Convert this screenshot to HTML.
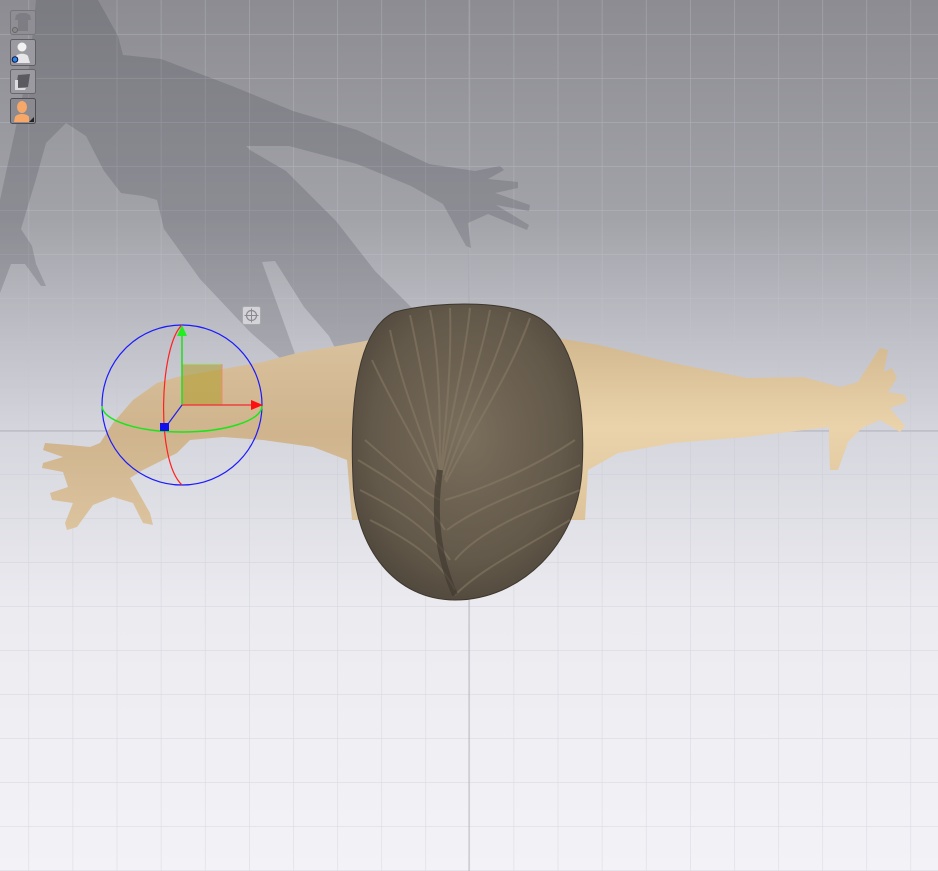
<!DOCTYPE html>
<html><head><meta charset="utf-8"><style>
html,body{margin:0;padding:0;width:938px;height:871px;overflow:hidden;}
svg{display:block}
</style></head><body>
<svg width="938" height="871" viewBox="0 0 938 871" xmlns="http://www.w3.org/2000/svg">
<defs>
<linearGradient id="bg" x1="0" y1="0" x2="0" y2="1">
<stop offset="0" stop-color="#8c8c92"/>
<stop offset="0.25" stop-color="#a2a2a9"/>
<stop offset="0.4" stop-color="#c2c2ca"/>
<stop offset="0.5" stop-color="#d6d6de"/>
<stop offset="0.7" stop-color="#ebebf0"/>
<stop offset="1" stop-color="#f3f3f7"/>
</linearGradient>
<linearGradient id="skin" x1="0" y1="0" x2="0" y2="1">
<stop offset="0" stop-color="#d2b78e"/>
<stop offset="0.5" stop-color="#ead3ab"/>
<stop offset="1" stop-color="#ddc39a"/>
</linearGradient>
<linearGradient id="skinL" x1="0" y1="0" x2="0" y2="1">
<stop offset="0" stop-color="#d9c19d"/>
<stop offset="0.5" stop-color="#cfb48d"/>
<stop offset="1" stop-color="#dcc49f"/>
</linearGradient>
<radialGradient id="hair" cx="0.5" cy="0.45" r="0.6">
<stop offset="0" stop-color="#7a6e5c"/>
<stop offset="0.7" stop-color="#63594a"/>
<stop offset="1" stop-color="#4e463b"/>
</radialGradient>
<pattern id="grid" width="44.1" height="44" patternUnits="userSpaceOnUse" x="28.5" y="34">
<path d="M0 0H44.1M0 0V44" stroke="rgba(195,195,205,0.5)" stroke-width="1.2" fill="none"/>
</pattern>
</defs>
<rect width="938" height="871" fill="url(#bg)"/>
<rect width="938" height="871" fill="url(#grid)"/>
<line x1="469" y1="0" x2="469" y2="871" stroke="rgba(165,165,175,0.45)" stroke-width="1.5"/>
<line x1="0" y1="431" x2="938" y2="431" stroke="rgba(165,165,175,0.45)" stroke-width="1.5"/>
<!-- shadow -->
<path fill="rgba(55,55,65,0.2)" d="M36,0 L98,0 L118,36 L123,55 L161,59 L232,86 L293,111 L357,130 L429,164 L475,171 L500,166 L504,170 L488,179 L518,182 L518,188 L495,193 L530,205 L529,211 L496,205 L529,225 L527,230 L488,214 L468,223 L471,248 L466,246 L443,204 L411,186 L357,164 L289,146 L236,146 L223,123 L250,150 L286,171 L336,221 L375,271 L411,307 L446,325 L393,339 L346,368 L343,364 L329,336 L304,307 L275,261 L262,262 L304,379 L250,332 L200,279 L164,229 L157,200 L143,196 L121,193 L104,171 L86,136 L66,123 L46,143 L36,179 L21,229 L32,246 L36,264 L46,286 L41,286 L25,264 L11,264 L0,293 L0,200 L14,136 L30,60 Z"/>
<!-- right arm/shoulder -->
<path fill="url(#skin)" d="M540,335 L599,345 L673,363 L747,378 L803,377 L840,387 L858,382 L872,360 L880,348 L888,350 L884,372 L892,368 L897,378 L888,392 L905,395 L907,402 L890,408 L905,426 L900,432 L880,420 L862,428 L848,442 L838,470 L830,470 L829,440 L829,427 L747,437 L673,443 L618,453 L588,470 L585,520 L560,520 Z"/>
<!-- left arm -->
<path fill="url(#skinL)" d="M380,338 L360,342 L297,353 L263,362 L217,370 L177,377 L157,383 L133,400 L113,423 L100,443 L90,447 L70,445 L45,443 L43,450 L63,457 L43,463 L42,468 L63,472 L68,487 L50,493 L52,500 L73,503 L65,523 L67,530 L77,527 L93,505 L113,497 L133,503 L143,523 L153,525 L150,513 L133,483 L130,478 L143,470 L177,453 L190,440 L223,437 L263,440 L313,447 L347,460 L352,520 L380,520 Z"/>
<!-- hair -->
<path fill="url(#hair)" stroke="#3e372e" stroke-width="1" d="M395,312 C440,300 520,300 545,322 C580,350 585,420 582,470 C578,545 520,600 455,600 C395,600 355,548 353,480 C350,410 355,330 395,312 Z"/>
<g stroke="#8c7f69" stroke-width="2" fill="none" opacity="0.5">
<path d="M410,315 C420,360 430,420 440,470"/>
<path d="M430,310 C440,360 440,420 440,470"/>
<path d="M450,308 C452,360 446,420 441,470"/>
<path d="M470,308 C465,360 450,420 442,470"/>
<path d="M490,310 C480,365 458,420 443,475"/>
<path d="M510,312 C495,370 465,420 445,480"/>
<path d="M530,318 C510,375 475,425 446,482"/>
<path d="M390,330 C400,380 420,430 438,480"/>
<path d="M372,360 C390,400 415,440 437,485"/>
<path d="M365,440 C400,470 420,490 440,500"/>
<path d="M575,440 C530,470 480,490 445,500"/>
<path d="M370,520 C410,540 440,560 455,590"/>
<path d="M570,520 C520,550 480,570 455,595"/>
<path d="M360,490 C400,510 430,530 450,560"/>
<path d="M580,490 C530,510 480,530 455,560"/>
<path d="M358,460 C400,485 430,505 445,530"/>
<path d="M580,465 C530,490 480,505 447,530"/>
</g>
<path d="M440,470 C432,520 440,560 455,595" stroke="#3d362d" stroke-width="6" fill="none" opacity="0.6"/>
<!-- gizmo -->
<rect x="182" y="364" width="40" height="41" fill="rgba(175,155,40,0.55)"/>
<line x1="182" y1="364" x2="222" y2="364" stroke="#9ee08a" stroke-width="1"/>
<line x1="222" y1="364" x2="222" y2="405" stroke="#f08a70" stroke-width="1"/>
<circle cx="182" cy="405" r="80" fill="none" stroke="#1a1aff" stroke-width="1.2"/>
<path d="M102,406 A80,26 0 0 0 262,406" fill="none" stroke="#19e619" stroke-width="1.5"/>
<path d="M182,325 C160,345 155,460 182,485" fill="none" stroke="#ff2020" stroke-width="1.2"/>
<line x1="182" y1="405" x2="182" y2="334" stroke="#22dd22" stroke-width="1.5"/>
<polygon points="182,325 177,336 187,336" fill="#22ee22"/>
<line x1="182" y1="405" x2="254" y2="405" stroke="#ee4040" stroke-width="1.5"/>
<polygon points="263,405 251,400 251,410" fill="#ff1010"/>
<line x1="182" y1="405" x2="165" y2="428" stroke="#2020ee" stroke-width="1.2"/>
<rect x="160" y="423" width="9" height="8" fill="#1010ee"/>
<!-- crosshair button -->
<rect x="242.5" y="306.5" width="18" height="18" rx="2" fill="#d4d4d8" stroke="#a8a8ae"/>
<circle cx="251.5" cy="315.5" r="5" fill="none" stroke="#8a8a90" stroke-width="1.2"/>
<path d="M251.5,308.5V322.5M244.5,315.5H258.5" stroke="#8a8a90" stroke-width="1"/>
<!-- toolbar icons -->
<g>
<rect x="10.5" y="10.5" width="25" height="24" rx="2" fill="#8e8e94" stroke="#76767c"/>
<path d="M16,15 L20,13 L26,13 L30,15 L31,20 L28,20 L28,31 L18,31 L18,20 L15,20 Z" fill="#7d7d83"/>
<circle cx="15" cy="30" r="2.5" fill="#888" stroke="#666"/>
<rect x="10.5" y="39.5" width="25" height="26" rx="2" fill="#9a9aa0" stroke="#5e5e64"/>
<circle cx="22" cy="47" r="4.5" fill="#f2f2f2"/>
<path d="M15,63 L16,56 C18,53 26,53 28,56 L30,63 Z" fill="#e6e6e8"/>
<circle cx="15" cy="59.5" r="2.8" fill="#2a86e8" stroke="#114"/>
<rect x="10.5" y="69.5" width="25" height="24" rx="2" fill="#9a9aa0" stroke="#66666c"/>
<path d="M18,75 L30,74 L28,87 L16,88 Z" fill="#5a5a60"/>
<path d="M15,80 L18,80 L18,88 L26,88 L25,90 L15,90 Z" fill="#dcdcde"/>
<rect x="10.5" y="98.5" width="25" height="25" rx="2" fill="#8a8a90" stroke="#4e4e54"/>
<ellipse cx="22" cy="107" rx="5" ry="6" fill="#f7a868"/>
<path d="M14,122 L15,117 C17,113 27,113 29,117 L29,122 Z" fill="#f7a868"/>
<polygon points="34,117 34,122 29,122" fill="#222"/>
</g>
</svg>
</body></html>
